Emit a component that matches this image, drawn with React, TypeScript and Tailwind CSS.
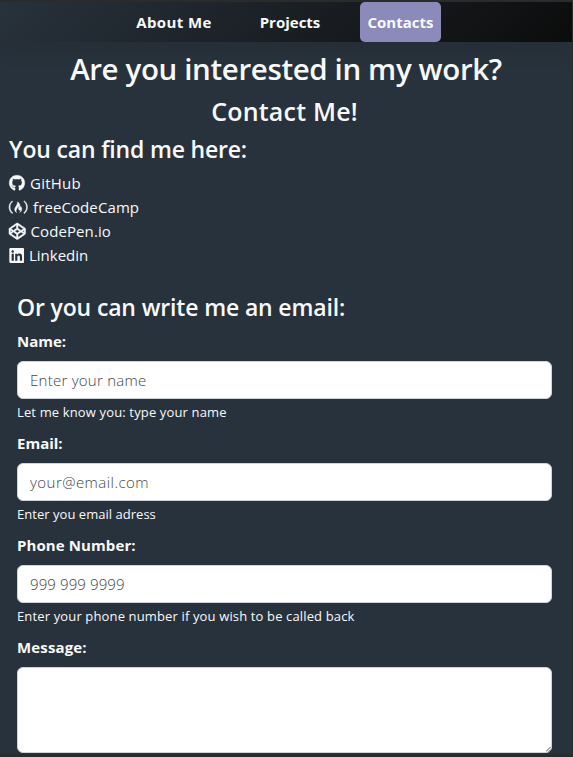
import type { ReactNode } from "react";
import { FaCodepen, FaFreeCodeCamp, FaGithub, FaLinkedin } from "react-icons/fa";

function ContactLink({ icon, label, className }: { icon: ReactNode; label: string; className: string }) {
  return (
    <li className="flex h-6 items-center">
      {icon}
      <a href="#" className={`whitespace-nowrap text-[15px] leading-6 ${className}`}>{label}</a>
    </li>
  );
}

function Field({
  label, labelClass, placeholder, placeholderClass, hint, hintClass,
}: {
  label: string; labelClass: string; placeholder: string; placeholderClass: string; hint: string; hintClass: string;
}) {
  return (
    <div className="h-[102px]">
      <label className={`block h-8 text-[15px] leading-6 font-bold whitespace-nowrap ${labelClass}`}>{label}</label>
      <input
        placeholder={placeholder}
        className={`block h-[38px] w-full rounded-md border border-[#ced4da] bg-white px-3 text-[15px] font-light placeholder:text-[#3f464d] ${placeholderClass}`}
      />
      <div className={`mt-[3px] text-[13px] leading-[21px] whitespace-nowrap ${hintClass}`}>{hint}</div>
    </div>
  );
}

export default function App() {
  return (
    <div className="flex h-[757px] w-[573px] flex-col overflow-hidden border-t-2 border-r border-b-3 border-[#2b2b2b] bg-[#28323c] font-['Open_Sans','Noto_Sans',sans-serif] text-[#f8f9fa]">
      <nav className="flex h-10 shrink-0 bg-linear-[135deg,#28323c,#0c0c0c] pl-[129px] text-[15px] font-bold shadow-[0_8px_16px_rgba(33,37,41,0.3)]">
        <a href="#" className="flex w-[90px] items-center justify-center tracking-[0.4px] whitespace-nowrap">About Me</a>
        <a href="#" className="ml-[34px] flex w-[74px] items-center justify-center whitespace-nowrap">Projects</a>
        <a href="#" className="ml-[33px] flex w-[81px] items-center justify-center rounded-[5px] bg-[#8c8aba] whitespace-nowrap">Contacts</a>
      </nav>
      <main className="flex-1">
        <h1 className="mt-2 text-center text-[29.5px] leading-[38px] font-semibold tracking-[-0.37px] whitespace-nowrap">Are you interested in my work?</h1>
        <h2 className="mt-1.5 text-center text-[25px] leading-[34px] font-semibold tracking-[0.2px] whitespace-nowrap"><span className="mr-[3px]">Contact Me!</span></h2>
        <h3 className="mt-[5px] pl-[9px] text-[23px] leading-8 font-semibold tracking-[-0.18px] whitespace-nowrap">You can find me here:</h3>
        <ul className="mt-[6px] pl-[8px]">
          <ContactLink icon={<FaGithub strokeWidth={12} className="mr-[5.5px] ml-[0.5px] h-4 w-4 overflow-visible" />} label="GitHub" className="tracking-[0.25px]" />
          <ContactLink icon={<FaFreeCodeCamp strokeWidth={16} className="mr-[6px] ml-[0.5px] h-[16.5px] w-[18.5px] overflow-visible" />} label="freeCodeCamp" className="tracking-[0.1px]" />
          <ContactLink icon={<FaCodepen strokeWidth={16} className="mr-[5.5px] ml-[0.5px] h-[16.5px] w-[16.5px] overflow-visible" />} label="CodePen.io" className="tracking-[0.1px]" />
          <ContactLink icon={<FaLinkedin className="mr-[5px] ml-[0.5px] h-[17px] w-[15.5px]" />} label="Linkedin" className="" />
        </ul>
        <form className="mt-6 w-[552px] pl-[17px]">
          <h3 className="mb-[6px] text-[23px] leading-8 font-semibold tracking-[-0.15px] whitespace-nowrap">Or you can write me an email:</h3>
          <Field label="Name:" labelClass="" placeholder="Enter your name" placeholderClass="tracking-[0.25px]" hint="Let me know you: type your name" hintClass="tracking-[0.14px]" />
          <Field label="Email:" labelClass="" placeholder="your@email.com" placeholderClass="tracking-[0.45px]" hint="Enter you email adress" hintClass="tracking-[0.03px]" />
          <Field label="Phone Number:" labelClass="tracking-[0.1px]" placeholder="999 999 9999" placeholderClass="tracking-[0.1px]" hint="Enter your phone number if you wish to be called back" hintClass="tracking-[0.14px]" />
          <label className="block h-8 text-[15px] leading-6 font-bold tracking-[0.15px]">Message:</label>
          <div className="relative">
            <textarea className="block h-[86px] w-full resize-none rounded-md border border-[#ced4da] bg-white" />
            <svg viewBox="0 0 5 5" className="pointer-events-none absolute right-px bottom-px h-[5px] w-[5px]" fill="none" stroke="#555555" strokeWidth="1">
              <path d="M0 4.5 4.5 0M2.8 4.7 4.7 2.8" />
            </svg>
          </div>
        </form>
      </main>
    </div>
  );
}
